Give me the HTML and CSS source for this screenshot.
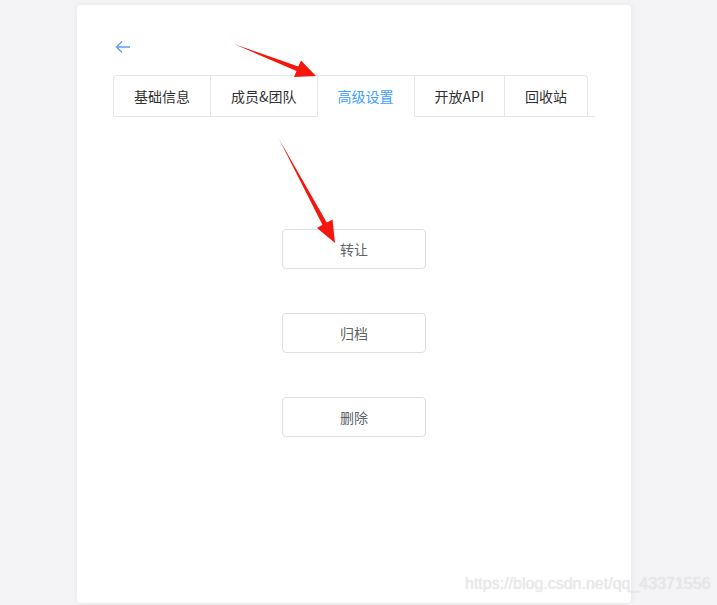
FILE: index.html
```html
<!DOCTYPE html>
<html lang="zh-CN">
<head>
    <meta charset="UTF-8">
    <meta name="viewport" content="width=device-width, initial-scale=1.0">
    <title>项目设置</title>
    <link rel="stylesheet" href="styles.css">
</head>
<body>
    <div class="card">
        <div class="back">
            <svg width="16" height="16" viewBox="0 0 16 16">
                <path d="M1.5 8 H15 M7 2.5 L1.5 8 L7 13.5" fill="none" stroke="#5c9cf5" stroke-width="1.3"/>
            </svg>
        </div>

        <div class="tabs-header">
            <ul class="tabs-nav">
                <li class="tab">基础信息</li>
                <li class="tab">成员&amp;团队</li>
                <li class="tab active">高级设置</li>
                <li class="tab">开放API</li>
                <li class="tab">回收站</li>
            </ul>
        </div>

        <div class="actions">
            <button class="btn">转让</button>
            <button class="btn">归档</button>
            <button class="btn">删除</button>
        </div>
    </div>

    <!-- annotation arrows -->
    <svg class="marks" width="717" height="605" viewBox="0 0 717 605">
        <polygon points="234,44 298.3,66.4 301,60.5 316,76 294,77 296.5,71" fill="#f5160c"/>
        <polygon points="279,139 326.8,222.4 332.5,219.5 335,243 317,228 322.4,224.8" fill="#f5160c"/>
    </svg>

    <div class="watermark">https://blog.csdn.net/qq_43371556</div>
</body>
</html>
```

FILE: styles.css
```css
body {
    margin: 0;
    background-color: #f4f4f6;
    font-family: "Noto Sans CJK SC", "Noto Sans", sans-serif;
    font-size: 14px;
    color: #303133;
    height: 605px;
    overflow: hidden;
}
.card {
    margin: 5px 0 0 77px;
    width: 554px;
    height: 598px;
    box-sizing: border-box;
    padding: 32px 36px 0 36px;
    background-color: #fff;
    border-radius: 4px;
    box-shadow: 0 0 6px rgba(0, 0, 0, 0.07);
}
.back {
    height: 20px;
    display: flex;
    align-items: center;
    padding-left: 2px;
    margin-bottom: 18px;
}
.tabs-header {
    display: flex;
    border-bottom: 1px solid #e4e7ed;
}
.tabs-nav {
    display: flex;
    margin: 0 0 -1px 0;
    padding: 0;
    list-style: none;
    border: 1px solid #e4e7ed;
    border-bottom: none;
    border-radius: 4px 4px 0 0;
}
.tab {
    height: 40px;
    line-height: 40px;
    padding: 0 20px;
    border-left: 1px solid #e4e7ed;
    border-bottom: 1px solid transparent;
    color: #303133;
}
.tab:first-child {
    border-left: none;
}
.tab.active {
    color: #409eff;
    border-bottom-color: #fff;
}
.actions {
    display: flex;
    flex-direction: column;
    align-items: center;
    gap: 44px;
    margin-top: 112px;
}
.btn {
    width: 144px;
    height: 40px;
    background-color: #fff;
    border: 1px solid #dcdfe6;
    border-radius: 4px;
    font-family: inherit;
    font-size: 14px;
    color: #606266;
}
.marks {
    position: absolute;
    left: 0;
    top: 0;
    pointer-events: none;
}
.watermark {
    position: absolute;
    left: 465px;
    top: 575px;
    font-family: "Liberation Sans", Arial, sans-serif;
    font-size: 16px;
    color: rgba(235, 235, 235, 0.9);
    text-shadow: 0 0 1px rgba(150, 150, 150, 0.35);
}
```
